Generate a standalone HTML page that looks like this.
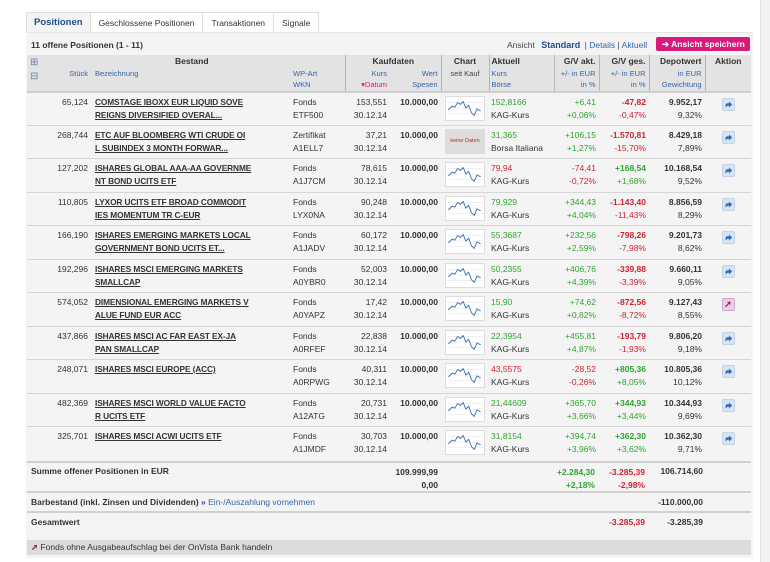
<!DOCTYPE html>
<html><head><meta charset="utf-8"><style>
*{margin:0;padding:0;box-sizing:border-box}
body{width:770px;height:562px;background:#fff;font-family:"Liberation Sans",Arial,sans-serif;font-size:8.5px;color:#333;position:relative;overflow:hidden}
.sb{position:absolute;left:760px;top:0;width:10px;height:562px;background:#f2f2f2;border-left:1px solid #e4e4e4}
.tabs{position:absolute;left:26px;top:12px;height:21px;display:flex}
.tab{height:21px;border:1px solid #ddd;border-bottom:none;background:#fff;padding:0 8px;line-height:20px;font-size:8.5px;color:#333;margin-right:-1px}
.tab.act{background:#f4f4f4;color:#1f4e8c;font-weight:bold;font-size:9.5px;padding:0 7px}
.panel{position:absolute;left:26px;top:32px;width:727px;height:526px;background:#f4f4f4;border-top:1px solid #e6e6e6}
.t1{position:absolute;left:31px;top:40px;font-weight:bold;font-size:8.5px}
.view{position:absolute;left:507px;top:40px;font-size:8.5px;color:#444}
.view b{color:#1f4e8c;font-size:9px;margin:0 2px 0 4px}
.view a{color:#3366a8;text-decoration:none}
.btn{position:absolute;left:656px;top:37px;width:94px;height:14px;background:#d6197a;border-radius:2px;color:#fff;font-weight:bold;font-size:8.5px;line-height:14px;padding-left:6px}
table{position:absolute;left:27px;top:55px;border-collapse:collapse;table-layout:fixed;width:724px}
td{vertical-align:top;padding:0;line-height:13px;white-space:nowrap;overflow:hidden}
thead tr{height:36px}
thead td{background:#e3e3e3;height:36px;padding-top:1px;color:#333;line-height:11.5px;overflow:visible}
thead .s{color:#3366a8;font-size:7.5px}
thead .h{font-weight:bold;font-size:8.5px}
.dv{border-right:1px solid #b5b5b5}
tbody td{border-top:1px solid #d6d6d6;padding-top:3px;padding-bottom:2px;background:#f4f4f4;height:33.5px}
tbody tr:first-child td{border-top:2px solid #cfcfcf}
.r{text-align:right;padding-right:3px}
.l{padding-left:4px}
.c{text-align:center}
.n a{color:#333;font-weight:bold;text-decoration:underline;font-size:8.3px;letter-spacing:-.1px}
.g{color:#2ea52e}.rd{color:#d0202e}
.ch{display:inline-block;width:40px;height:25px;background:#fff;border:1px solid #ddd;vertical-align:top}
.ac{display:inline-block;width:13px;height:13px;background:#d8e4f2;border:1px solid #c4d2e4;margin-top:2px;border-radius:2px;vertical-align:top}
.bld{font-weight:bold}
.foot{position:absolute;left:27px;width:724px;background:#f4f4f4;border-top:2px solid #d0d0d0}
</style></head><body>
<svg width="0" height="0" style="position:absolute"><defs>
<symbol id="ch" viewBox="0 0 40 25"><g stroke="#eee" stroke-width="1"><line x1="0" y1="6" x2="40" y2="6"/><line x1="0" y1="12" x2="40" y2="12"/><line x1="0" y1="18" x2="40" y2="18"/></g><polyline fill="none" stroke="#3a6fb0" stroke-width="1" points="2,14 6,10 9,11 12,6 15,8 18,5 21,12 24,9 27,17 30,20 33,13 37,15"/></symbol>
<symbol id="ar" viewBox="0 0 13 13"><path d="M3 10 L3 7 Q3 5 6 5 L7 5 L7 3 L11 6.5 L7 10 L7 8 L6 8 Q5 8 3 10Z" fill="#2e6ec0"/></symbol>
</defs></svg>
<div class="sb"></div>
<div class="tabs"><div class="tab act">Positionen</div><div class="tab">Geschlossene Positionen</div><div class="tab">Transaktionen</div><div class="tab">Signale</div></div>
<div class="panel"></div>
<div class="t1">11 offene Positionen (1 - 11)</div>
<div class="view">Ansicht <b>Standard</b> | <a>Details</a> | <a>Aktuell</a></div>
<div class="btn">➔ Ansicht speichern</div>
<table>
<colgroup><col style="width:28px"><col style="width:36px"><col style="width:199px"><col style="width:55px"><col style="width:45px"><col style="width:51px"><col style="width:48px"><col style="width:65px"><col style="width:45px"><col style="width:50px"><col style="width:56px"><col style="width:46px"></colgroup>
<thead><tr>
<td style="padding-left:3px;color:#6a7ea0;font-size:10px;line-height:14px">⊞<br>⊟</td>
<td class="r"><br><span class="s">Stück</span></td>
<td class="l"><div class="h" style="position:relative;left:80px">Bestand</div><span class="s">Bezeichnung</span></td>
<td class="dv" style="padding-left:3px"><br><span class="s">WP-Art<br>WKN</span></td>
<td class="r" style="padding-right:3px;position:relative"><div class="h" style="position:absolute;left:27px;top:1px">Kaufdaten</div><br><span class="s">Kurs<br><span style="color:#d6197a">▾Datum</span></span></td>
<td class="r dv"><br><span class="s">Wert<br>Spesen</span></td>
<td class="c dv"><div class="h">Chart</div><span class="s" style="color:#444">seit Kauf</span></td>
<td class="l dv" style="padding-left:2px"><div class="h">Aktuell</div><span class="s">Kurs<br>Börse</span></td>
<td class="r dv"><div class="h">G/V akt.</div><span class="s">+/- in EUR<br>in %</span></td>
<td class="r dv"><div class="h">G/V ges.</div><span class="s">+/- in EUR<br>in %</span></td>
<td class="r dv"><div class="h">Depotwert</div><span class="s">in EUR<br>Gewichtung</span></td>
<td class="c"><div class="h">Aktion</div></td>
</tr></thead>
<tbody>
<tr><td></td><td class="r">65,124</td><td class="l n"><a>COMSTAGE IBOXX EUR LIQUID SOVE<br>REIGNS DIVERSIFIED OVERAL...</a></td><td style="padding-left:3px">Fonds<br>ETF500</td><td class="r">153,551<br>30.12.14</td><td class="r bld">10.000,00</td><td class="c"><svg class="ch"><use href="#ch"/></svg></td><td class="l" style="padding-left:2px"><span class="g">152,8166</span><br>KAG-Kurs</td><td class="r g">+6,41<br>+0,06%</td><td class="r rd"><b>-47,82</b><br>-0,47%</td><td class="r"><b>9.952,17</b><br>9,32%</td><td class="c"><svg class="ac"><use href="#ar"/></svg></td></tr>
<tr><td></td><td class="r">268,744</td><td class="l n"><a>ETC AUF BLOOMBERG WTI CRUDE OI<br>L SUBINDEX 3 MONTH FORWAR...</a></td><td style="padding-left:3px">Zertifikat<br>A1ELL7</td><td class="r">37,21<br>30.12.14</td><td class="r bld">10.000,00</td><td class="c"><span class="ch" style="background:#ddd;color:#d0202e;font-size:5.5px;line-height:23px">keine Daten</span></td><td class="l" style="padding-left:2px"><span class="g">31,365</span><br>Borsa Italiana</td><td class="r g">+106,15<br>+1,27%</td><td class="r rd"><b>-1.570,81</b><br>-15,70%</td><td class="r"><b>8.429,18</b><br>7,89%</td><td class="c"><svg class="ac"><use href="#ar"/></svg></td></tr>
<tr><td></td><td class="r">127,202</td><td class="l n"><a>ISHARES GLOBAL AAA-AA GOVERNME<br>NT BOND UCITS ETF</a></td><td style="padding-left:3px">Fonds<br>A1J7CM</td><td class="r">78,615<br>30.12.14</td><td class="r bld">10.000,00</td><td class="c"><svg class="ch"><use href="#ch"/></svg></td><td class="l" style="padding-left:2px"><span class="rd">79,94</span><br>KAG-Kurs</td><td class="r rd">-74,41<br>-0,72%</td><td class="r g"><b>+168,54</b><br>+1,68%</td><td class="r"><b>10.168,54</b><br>9,52%</td><td class="c"><svg class="ac"><use href="#ar"/></svg></td></tr>
<tr><td></td><td class="r">110,805</td><td class="l n"><a>LYXOR UCITS ETF BROAD COMMODIT<br>IES MOMENTUM TR C-EUR</a></td><td style="padding-left:3px">Fonds<br>LYX0NA</td><td class="r">90,248<br>30.12.14</td><td class="r bld">10.000,00</td><td class="c"><svg class="ch"><use href="#ch"/></svg></td><td class="l" style="padding-left:2px"><span class="g">79,929</span><br>KAG-Kurs</td><td class="r g">+344,43<br>+4,04%</td><td class="r rd"><b>-1.143,40</b><br>-11,43%</td><td class="r"><b>8.856,59</b><br>8,29%</td><td class="c"><svg class="ac"><use href="#ar"/></svg></td></tr>
<tr><td></td><td class="r">166,190</td><td class="l n"><a>ISHARES EMERGING MARKETS LOCAL<br>GOVERNMENT BOND UCITS ET...</a></td><td style="padding-left:3px">Fonds<br>A1JADV</td><td class="r">60,172<br>30.12.14</td><td class="r bld">10.000,00</td><td class="c"><svg class="ch"><use href="#ch"/></svg></td><td class="l" style="padding-left:2px"><span class="g">55,3687</span><br>KAG-Kurs</td><td class="r g">+232,56<br>+2,59%</td><td class="r rd"><b>-798,26</b><br>-7,98%</td><td class="r"><b>9.201,73</b><br>8,62%</td><td class="c"><svg class="ac"><use href="#ar"/></svg></td></tr>
<tr><td></td><td class="r">192,296</td><td class="l n"><a>ISHARES MSCI EMERGING MARKETS<br>SMALLCAP</a></td><td style="padding-left:3px">Fonds<br>A0YBR0</td><td class="r">52,003<br>30.12.14</td><td class="r bld">10.000,00</td><td class="c"><svg class="ch"><use href="#ch"/></svg></td><td class="l" style="padding-left:2px"><span class="g">50,2355</span><br>KAG-Kurs</td><td class="r g">+406,76<br>+4,39%</td><td class="r rd"><b>-339,88</b><br>-3,39%</td><td class="r"><b>9.660,11</b><br>9,05%</td><td class="c"><svg class="ac"><use href="#ar"/></svg></td></tr>
<tr><td></td><td class="r">574,052</td><td class="l n"><a>DIMENSIONAL EMERGING MARKETS V<br>ALUE FUND EUR ACC</a></td><td style="padding-left:3px">Fonds<br>A0YAPZ</td><td class="r">17,42<br>30.12.14</td><td class="r bld">10.000,00</td><td class="c"><svg class="ch"><use href="#ch"/></svg></td><td class="l" style="padding-left:2px"><span class="g">15,90</span><br>KAG-Kurs</td><td class="r g">+74,62<br>+0,82%</td><td class="r rd"><b>-872,56</b><br>-8,72%</td><td class="r"><b>9.127,43</b><br>8,55%</td><td class="c"><span class="ac" style="background:#e8d0e4;border-color:#d0a8cc;color:#a0166e;font-size:9px;line-height:11px;font-weight:bold">➚</span></td></tr>
<tr><td></td><td class="r">437,866</td><td class="l n"><a>ISHARES MSCI AC FAR EAST EX-JA<br>PAN SMALLCAP</a></td><td style="padding-left:3px">Fonds<br>A0RFEF</td><td class="r">22,838<br>30.12.14</td><td class="r bld">10.000,00</td><td class="c"><svg class="ch"><use href="#ch"/></svg></td><td class="l" style="padding-left:2px"><span class="g">22,3954</span><br>KAG-Kurs</td><td class="r g">+455,81<br>+4,87%</td><td class="r rd"><b>-193,79</b><br>-1,93%</td><td class="r"><b>9.806,20</b><br>9,18%</td><td class="c"><svg class="ac"><use href="#ar"/></svg></td></tr>
<tr><td></td><td class="r">248,071</td><td class="l n"><a>ISHARES MSCI EUROPE (ACC)</a></td><td style="padding-left:3px">Fonds<br>A0RPWG</td><td class="r">40,311<br>30.12.14</td><td class="r bld">10.000,00</td><td class="c"><svg class="ch"><use href="#ch"/></svg></td><td class="l" style="padding-left:2px"><span class="rd">43,5575</span><br>KAG-Kurs</td><td class="r rd">-28,52<br>-0,26%</td><td class="r g"><b>+805,36</b><br>+8,05%</td><td class="r"><b>10.805,36</b><br>10,12%</td><td class="c"><svg class="ac"><use href="#ar"/></svg></td></tr>
<tr><td></td><td class="r">482,369</td><td class="l n"><a>ISHARES MSCI WORLD VALUE FACTO<br>R UCITS ETF</a></td><td style="padding-left:3px">Fonds<br>A12ATG</td><td class="r">20,731<br>30.12.14</td><td class="r bld">10.000,00</td><td class="c"><svg class="ch"><use href="#ch"/></svg></td><td class="l" style="padding-left:2px"><span class="g">21,44609</span><br>KAG-Kurs</td><td class="r g">+365,70<br>+3,66%</td><td class="r g"><b>+344,93</b><br>+3,44%</td><td class="r"><b>10.344,93</b><br>9,69%</td><td class="c"><svg class="ac"><use href="#ar"/></svg></td></tr>
<tr><td></td><td class="r">325,701</td><td class="l n"><a>ISHARES MSCI ACWI UCITS ETF</a></td><td style="padding-left:3px">Fonds<br>A1JMDF</td><td class="r">30,703<br>30.12.14</td><td class="r bld">10.000,00</td><td class="c"><svg class="ch"><use href="#ch"/></svg></td><td class="l" style="padding-left:2px"><span class="g">31,8154</span><br>KAG-Kurs</td><td class="r g">+394,74<br>+3,96%</td><td class="r g"><b>+362,30</b><br>+3,62%</td><td class="r"><b>10.362,30</b><br>9,71%</td><td class="c"><svg class="ac"><use href="#ar"/></svg></td></tr>
</tbody></table>

<div class="foot" style="top:461px;height:30px">
<div style="position:absolute;left:4px;top:3px;font-weight:bold">Summe offener Positionen in EUR</div>
<div style="position:absolute;right:313px;top:3px;text-align:right;line-height:13px;font-weight:bold">109.999,99<br>0,00</div>
<div style="position:absolute;right:156px;top:3px;text-align:right;line-height:13px;font-weight:bold" class="g">+2.284,30<br>+2,18%</div>
<div style="position:absolute;right:106px;top:3px;text-align:right;line-height:13px;font-weight:bold" class="rd">-3.285,39<br>-2,98%</div>
<div style="position:absolute;right:48px;top:3px;font-weight:bold">106.714,60</div>
</div>
<div class="foot" style="top:491px;height:20px">
<div style="position:absolute;left:4px;top:4px"><b>Barbestand (inkl. Zinsen und Dividenden)</b> <b style="color:#1f4e8c">»</b> <span style="color:#3366a8">Ein-/Auszahlung vornehmen</span></div>
<div style="position:absolute;right:48px;top:4px;font-weight:bold">-110.000,00</div>
</div>
<div class="foot" style="top:511px;height:29px">
<div style="position:absolute;left:4px;top:4px;font-weight:bold">Gesamtwert</div>
<div style="position:absolute;right:106px;top:4px;font-weight:bold" class="rd">-3.285,39</div>
<div style="position:absolute;right:48px;top:4px;font-weight:bold">-3.285,39</div>
</div>
<div style="position:absolute;left:27px;top:540px;width:724px;height:15px;background:#dcdcdc;line-height:15px;padding-left:4px"><span style="color:#a0166e;font-weight:bold">➚</span> Fonds ohne Ausgabeaufschlag bei der OnVista Bank handeln</div>
</body></html>
